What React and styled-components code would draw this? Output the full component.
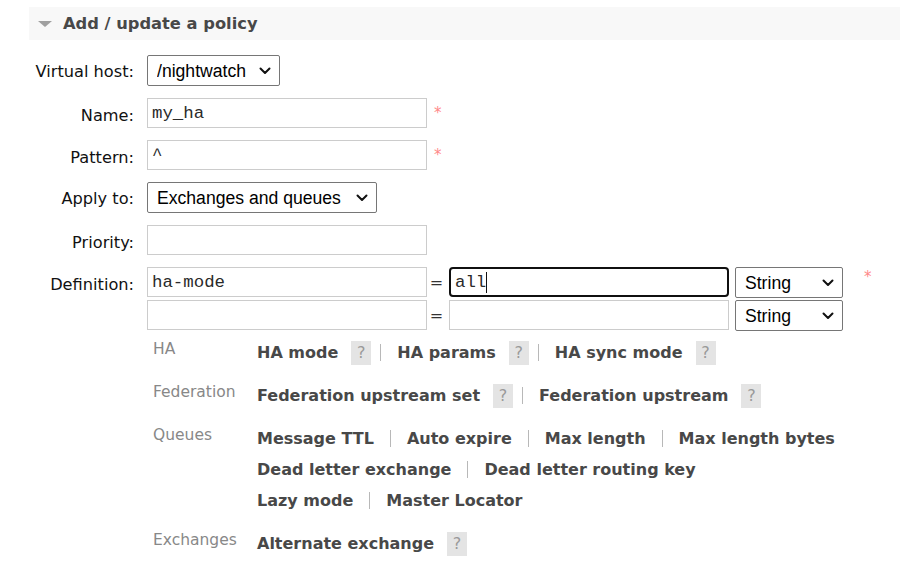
import React from 'react';
import styled, { createGlobalStyle } from 'styled-components';

const Global = createGlobalStyle`
  html, body { margin: 0; padding: 0; background: #fff; }
  body { font-family: "DejaVu Sans", Verdana, sans-serif; color: #111; }
  * { box-sizing: border-box; }
`;

const Page = styled.div`
  width: 900px;
  padding-top: 7px;
`;

const Header = styled.div`
  display: flex;
  align-items: center;
  height: 33px;
  margin-left: 29px;
  padding-left: 9px;
  background: #f8f8f8;
`;

const Triangle = styled.span`
  width: 0;
  height: 0;
  border-left: 7px solid transparent;
  border-right: 7px solid transparent;
  border-top: 6px solid #a0a0a0;
  margin-right: 11px;
  margin-top: 1px;
`;

const Title = styled.h2`
  margin: 0;
  font-size: 16.3px;
  font-weight: bold;
  color: #484848;
`;

const Form = styled.div`
  display: grid;
  grid-template-columns: 134px auto;
  column-gap: 13px;
  row-gap: 12px;
  margin-top: 15px;
  align-items: start;
`;

const Label = styled.label`
  display: block;
  text-align: right;
  font-size: 16.2px;
  height: ${(p) => (p.$select ? 31 : 30)}px;
  line-height: ${(p) => (p.$select ? 33 : 36)}px;
  color: #111;
`;

const Field = styled.div`
  display: flex;
  align-items: flex-start;
`;

const TextInput = styled.input`
  width: 280px;
  height: 30px;
  margin: 0;
  border: 1px solid #ccc;
  border-radius: 0;
  padding: 0 4px;
  font-family: "Liberation Mono", monospace;
  font-size: 17.4px;
  color: #2a2a2a;
  background: #fff;
  outline: none;
`;

const FocusedInput = styled(TextInput)`
  border: 2px solid #101010;
  border-radius: 4px;
  padding: 0 4px;
`;

const CaretWrap = styled.div`
  position: relative;
  width: 280px;
`;

const Caret = styled.span`
  position: absolute;
  left: 37px;
  top: 5px;
  width: 1px;
  height: 21px;
  background: #111;
`;

const SelectWrap = styled.div`
  position: relative;
  display: inline-block;
  width: ${(p) => p.$w}px;
  height: 31px;
`;

const Select = styled.select`
  appearance: none;
  -webkit-appearance: none;
  width: 100%;
  height: 31px;
  margin: 0;
  padding: 0 0 0 9px;
  font-family: "Liberation Sans", Arial, sans-serif;
  font-size: 17.6px;
  color: #000;
  background: #fff;
  border: 1px solid #767676;
  border-radius: 2px;
  outline: none;
`;

const Chevron = styled.svg`
  position: absolute;
  right: 9px;
  top: 12px;
  width: 12px;
  height: 8px;
  pointer-events: none;
`;

const Star = styled.span`
  color: #f88;
  font-size: 15px;
  line-height: 1;
  margin-left: ${(p) => p.$ml || 7}px;
  margin-top: ${(p) => p.$mt || 8}px;
`;

const DefGrid = styled.div`
  display: grid;
  grid-template-columns: 280px 22px 280px 114px auto;
  row-gap: 2px;
  align-items: start;
`;

const Eq = styled.span`
  text-align: center;
  font-size: 16px;
  height: 30px;
  line-height: 32px;
  color: #333;
  padding-right: 3px;
`;

const TypeCell = styled.div`
  padding-left: 6px;
`;

const HelpTable = styled.div`
  grid-column: 2;
  display: grid;
  grid-template-columns: 104px auto;
  row-gap: 12px;
  margin-left: 6px;
  margin-top: -6px;
`;

const Category = styled.div`
  font-size: 15.5px;
  line-height: 25px;
  color: #888;
`;

const Lines = styled.div`
  display: flex;
  flex-direction: column;
`;

const Line = styled.div`
  display: flex;
  align-items: center;
  height: 31px;
  white-space: nowrap;
`;

const Link = styled.span`
  font-size: 16px;
  font-weight: bold;
  color: #484848;
  padding-right: 7px;
  cursor: pointer;
`;

const Help = styled.span`
  display: inline-flex;
  align-items: center;
  justify-content: center;
  width: 20px;
  height: 24px;
  margin-left: 6px;
  background: #e4e4e4;
  color: #999;
  font-size: 16px;
`;

const Sep = styled.span`
  width: 2px;
  height: 17px;
  margin: 0 15px 0 9px;
  border-left: 1px solid #b8b8b8;
`;

function TypeSelect({ w, value }) {
  return (
    <SelectWrap $w={w}>
      <Select defaultValue={value}>
        <option>{value}</option>
      </Select>
      <Chevron viewBox="0 0 12 8">
        <path d="M1.5 1.5 L6 6 L10.5 1.5" fill="none" stroke="#111" strokeWidth="2" strokeLinecap="round" strokeLinejoin="round" />
      </Chevron>
    </SelectWrap>
  );
}

const helpRows = [
  { cat: 'HA', lines: [[['HA mode', true], ['HA params', true], ['HA sync mode', true]]] },
  { cat: 'Federation', lines: [[['Federation upstream set', true], ['Federation upstream', true]]] },
  {
    cat: 'Queues',
    lines: [
      [['Message TTL'], ['Auto expire'], ['Max length'], ['Max length bytes']],
      [['Dead letter exchange'], ['Dead letter routing key']],
      [['Lazy mode'], ['Master Locator']],
    ],
  },
  { cat: 'Exchanges', lines: [[['Alternate exchange', true]]] },
];

export default function App() {
  return (
    <Page>
      <Global />
      <Header>
        <Triangle />
        <Title>Add / update a policy</Title>
      </Header>
      <Form>
        <Label $select>Virtual host:</Label>
        <Field>
          <TypeSelect w={133} value="/nightwatch" />
        </Field>

        <Label>Name:</Label>
        <Field>
          <TextInput defaultValue="my_ha" />
          <Star>*</Star>
        </Field>

        <Label>Pattern:</Label>
        <Field>
          <TextInput defaultValue="^" />
          <Star>*</Star>
        </Field>

        <Label $select>Apply to:</Label>
        <Field>
          <TypeSelect w={230} value="Exchanges and queues" />
        </Field>

        <Label>Priority:</Label>
        <Field>
          <TextInput defaultValue="" />
        </Field>

        <Label>Definition:</Label>
        <DefGrid>
          <TextInput defaultValue="ha-mode" />
          <Eq>=</Eq>
          <CaretWrap>
            <FocusedInput defaultValue="all" />
            <Caret />
          </CaretWrap>
          <TypeCell>
            <TypeSelect w={108} value="String" />
          </TypeCell>
          <Star $ml={21} $mt={3}>*</Star>

          <TextInput defaultValue="" />
          <Eq>=</Eq>
          <TextInput defaultValue="" />
          <TypeCell>
            <TypeSelect w={108} value="String" />
          </TypeCell>
          <span />
        </DefGrid>

        <HelpTable>
          {helpRows.map((row) => (
            <React.Fragment key={row.cat}>
              <Category>{row.cat}</Category>
              <Lines>
                {row.lines.map((items, li) => (
                  <Line key={li}>
                    {items.map(([name, hasHelp], i) => (
                      <React.Fragment key={name}>
                        {i > 0 && <Sep />}
                        <Link>{name}</Link>
                        {hasHelp && <Help>?</Help>}
                      </React.Fragment>
                    ))}
                  </Line>
                ))}
              </Lines>
            </React.Fragment>
          ))}
        </HelpTable>
      </Form>
    </Page>
  );
}
